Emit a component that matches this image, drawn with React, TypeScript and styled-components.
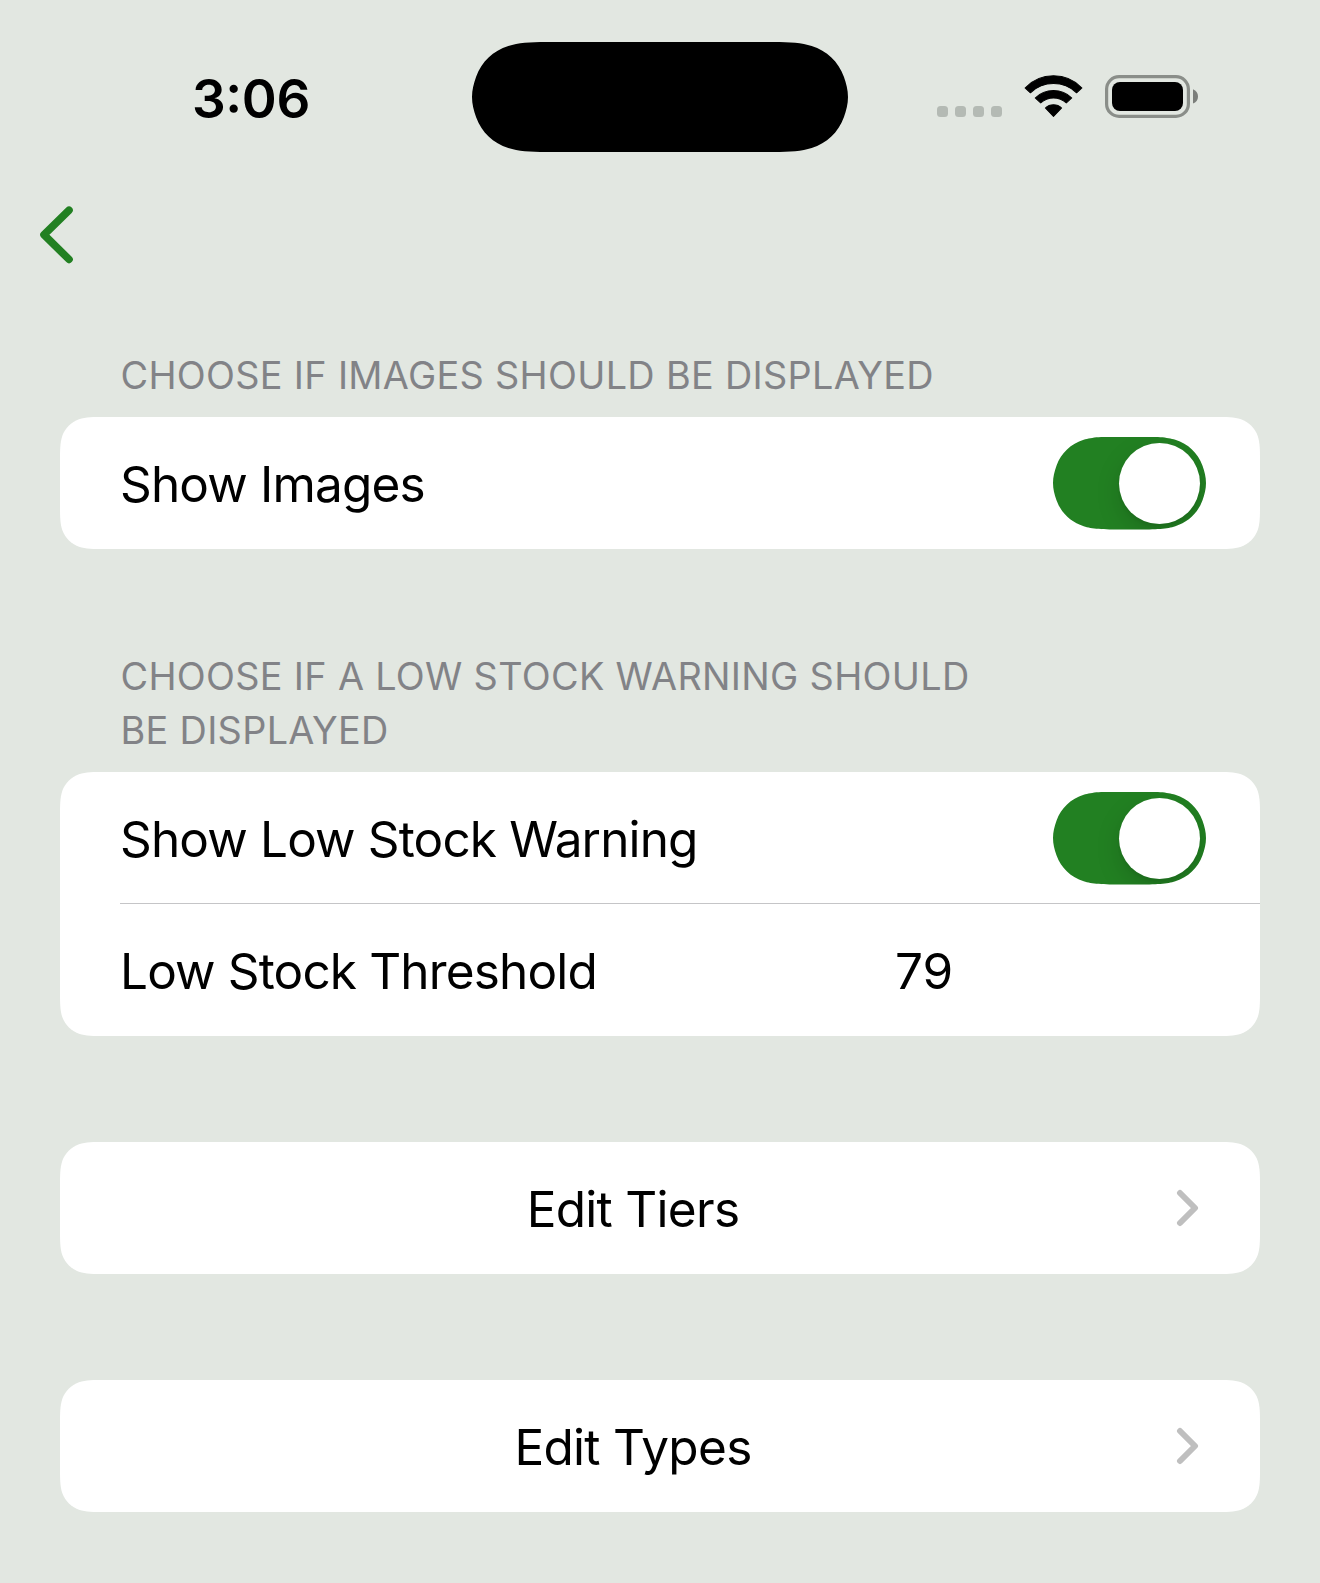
import React from "react";
import styled, { createGlobalStyle } from "styled-components";

const colors = {
  background: "#e2e7e1",
  card: "#ffffff",
  tint: "#228022",
  header: "#828387",
  separator: "#c5c5c7",
  disclosure: "#bfbfbf",
};

/* Rounded rectangle with continuous curvature; `reach` is how far, in radii,
   the curve runs along the horizontal edge. Shapes too short for the full
   vertical run are drawn as capsules with a longer shoulder. */
const squircle = (w: number, h: number, r: number, reach = 1.5287) => {
  const vReach = Math.min(1.5287, h / 2 / r);
  const capsule = vReach < 1.4;
  const a = capsule ? [0.66, 0.072] : [0.6315, 0.0749];
  const m = capsule ? [0.385, 0.16] : [0.3728, 0.1691];
  const n = capsule ? [0.176, 0.353] : [0.1691, 0.3728];
  const b = capsule ? [0.84, 0.0144] : [0.8684, 0];
  const c = capsule ? 1.05 : 1.0885;
  const d = capsule ? 0.874 : 1.0885;
  const e = capsule ? [0.032, 0.75] : [0, 0.8684];
  const p = (x: number, y: number, fx: boolean, fy: boolean) =>
    `${(fx ? w - x * r : x * r).toFixed(2)} ${(fy ? h - y * r : y * r).toFixed(2)}`;
  const down = (fx: boolean, fy: boolean) =>
    `C${p(c, 0, fx, fy)} ${p(b[0], b[1], fx, fy)} ${p(a[0], a[1], fx, fy)}` +
    `C${p(m[0], m[1], fx, fy)} ${p(n[0], n[1], fx, fy)} ${p(0.0749, 0.6315, fx, fy)}` +
    `C${p(e[0], e[1], fx, fy)} ${p(0, d, fx, fy)} ${p(0, vReach, fx, fy)}`;
  const up = (fx: boolean, fy: boolean) =>
    `C${p(0, d, fx, fy)} ${p(e[0], e[1], fx, fy)} ${p(0.0749, 0.6315, fx, fy)}` +
    `C${p(n[0], n[1], fx, fy)} ${p(m[0], m[1], fx, fy)} ${p(a[0], a[1], fx, fy)}` +
    `C${p(b[0], b[1], fx, fy)} ${p(c, 0, fx, fy)} ${p(reach, 0, fx, fy)}`;
  return (
    `M${p(reach, 0, true, false)}${down(true, false)}` +
    `L${p(0, vReach, true, true)}${up(true, true)}` +
    `L${p(reach, 0, false, true)}${down(false, true)}` +
    `L${p(0, vReach, false, false)}${up(false, false)}Z`
  );
};

const GlobalStyle = createGlobalStyle`
  body {
    margin: 0;
    background: ${colors.background};
  }
`;

const Screen = styled.div`
  box-sizing: border-box;
  width: 1320px;
  height: 1583px;
  overflow: hidden;
  background: ${colors.background};
  color: #000;
  font-family: Inter, "Liberation Sans", sans-serif;
`;

const StatusBar = styled.header`
  display: grid;
  grid-template-columns: 472px 376px 1fr;
  height: 194px;
`;

const Time = styled.time`
  padding: 65.5px 0 0 192px;
  font-size: 53px;
  line-height: 66px;
  font-weight: 600;
  letter-spacing: -0.4px;
  font-feature-settings: "calt" 1, "case" 1;
`;

const Island = styled.div`
  width: 376px;
  height: 110px;
  margin-top: 42px;
  background: #000;
  clip-path: path("${squircle(376, 110, 55, 1.35)}");
`;

const StatusIcons = styled.div`
  display: flex;
  padding: 74px 0 0 89px;
`;

const Cellular = styled.div`
  display: flex;
  gap: 7px;
  margin: 32px 21px 0 0;
`;

const Dot = styled.span`
  width: 11px;
  height: 11px;
  border-radius: 3.5px;
  background: #b4bab4;
`;

const WifiIcon = styled.svg`
  width: 61px;
  height: 46px;
  margin-right: 20px;
`;

const BatteryIcon = styled.svg`
  width: 96px;
  height: 46px;
`;

const NavBar = styled.nav`
  display: flex;
  align-items: center;
  height: 82px;
  padding-left: 36px;
`;

const BackButton = styled.button`
  display: flex;
  padding: 0;
  border: 0;
  background: none;
  color: ${colors.tint};
`;

const Form = styled.main`
  display: flex;
  flex-direction: column;
  padding: 72px 60px 0;
`;

const Section = styled.section<{ $space?: number }>`
  margin-bottom: ${({ $space = 106 }) => $space}px;
`;

const SectionHeader = styled.h2`
  margin: 0;
  width: 900px;
  padding: 0 60px 15px 60.5px;
  color: ${colors.header};
  font-size: 37.8px;
  line-height: 54px;
  font-weight: 400;
  letter-spacing: 0.32px;
  text-transform: uppercase;
`;

const Card = styled.div<{ $rows?: number }>`
  height: ${({ $rows = 1 }) => $rows * 132}px;
  background: ${colors.card};
  clip-path: path("${({ $rows = 1 }) => squircle(1200, $rows * 132, 30)}");
`;

const Row = styled.div<{ $divided?: boolean }>`
  box-sizing: border-box;
  display: flex;
  align-items: center;
  height: 132px;
  margin-left: 60px;
  padding-right: 54px;
  box-shadow: ${({ $divided }) => ($divided ? `inset 0 -1px ${colors.separator}` : "none")};
`;

const Label = styled.span<{ $centered?: boolean }>`
  flex: 1;
  padding-top: 2px;
  font-size: 49.5px;
  line-height: 60px;
  letter-spacing: ${({ $centered }) => ($centered ? "-0.7px" : "-0.85px")};
  white-space: nowrap;
  text-align: ${({ $centered }) => ($centered ? "center" : "left")};
`;

const Value = styled(Label)`
  flex: 0 0 311px;
  letter-spacing: 0;
`;

const Switch = styled.button`
  display: flex;
  justify-content: flex-end;
  box-sizing: border-box;
  width: 153px;
  height: 93px;
  padding: 6px;
  border: 0;
  background: ${colors.tint};
  clip-path: path("${squircle(153, 93, 46.5)}");
`;

const Knob = styled.span`
  width: 81px;
  height: 81px;
  border-radius: 50%;
  background: #fff;
  box-shadow: 0 9px 24px rgba(0, 0, 0, 0.15), 0 3px 3px rgba(0, 0, 0, 0.06);
`;

const Disclosure = styled.svg`
  width: 24px;
  height: 40px;
  margin: 0 6px 0 30px;
`;

const Wifi = () => (
  <WifiIcon viewBox="0 0 60 46" preserveAspectRatio="none" stroke="#000" strokeWidth="1" strokeLinejoin="round">
    <path d="M2 14A38.3 38.3 0 0 1 58 14L52.7 18.8A32.5 32.5 0 0 0 7.3 18.8Z" />
    <path d="M12 24A25.4 25.4 0 0 1 48 24L42.6 29A18.2 18.2 0 0 0 17.4 29Z" />
    <path d="M22 34A11.3 11.3 0 0 1 38 34L30 42.4Z" />
  </WifiIcon>
);

const Battery = () => (
  <BatteryIcon viewBox="0 0 96 46">
    <rect x="2.6" y="2.6" width="81.8" height="39.8" rx="12.5" fill="none" stroke="#8a8e89" strokeWidth="3.2" />
    <rect x="8" y="8" width="71" height="29" rx="8" />
    <path d="M89 15.2C92 16.4 94 19 94 22.4C94 25.8 92 28.4 89 29.6Z" fill="#7b7e7a" />
  </BatteryIcon>
);

const Toggle = () => (
  <Switch type="button" role="switch" aria-checked>
    <Knob />
  </Switch>
);

const LinkRow = ({ children }: { children: React.ReactNode }) => (
  <Row>
    <Label $centered>{children}</Label>
    <Disclosure viewBox="0 0 24 40" fill="none" stroke={colors.disclosure} strokeWidth="6" strokeLinecap="round" strokeLinejoin="round">
      <path d="M4 5L19 20L4 35" />
    </Disclosure>
  </Row>
);

export default function App() {
  return (
    <>
      <GlobalStyle />
      <Screen>
        <StatusBar>
          <Time>3:06</Time>
          <Island />
          <StatusIcons>
            <Cellular>
              <Dot />
              <Dot />
              <Dot />
              <Dot />
            </Cellular>
            <Wifi />
            <Battery />
          </StatusIcons>
        </StatusBar>
        <NavBar>
          <BackButton type="button" aria-label="Back">
            <svg width="40" height="60" viewBox="0 0 40 60" fill="none" stroke="currentColor" strokeWidth="7.6" strokeLinecap="round" strokeLinejoin="round">
              <path d="M33 5.2L8 29.8L33 54.4" />
            </svg>
          </BackButton>
        </NavBar>
        <Form>
          <Section $space={100}>
            <SectionHeader>Choose if images should be displayed</SectionHeader>
            <Card>
              <Row>
                <Label>Show Images</Label>
                <Toggle />
              </Row>
            </Card>
          </Section>
          <Section>
            <SectionHeader>Choose if a low stock warning should be displayed</SectionHeader>
            <Card $rows={2}>
              <Row $divided>
                <Label>Show Low Stock Warning</Label>
                <Toggle />
              </Row>
              <Row>
                <Label>Low Stock Threshold</Label>
                <Value>79</Value>
              </Row>
            </Card>
          </Section>
          <Section>
            <Card>
              <LinkRow>Edit Tiers</LinkRow>
            </Card>
          </Section>
          <Section>
            <Card>
              <LinkRow>Edit Types</LinkRow>
            </Card>
          </Section>
        </Form>
      </Screen>
    </>
  );
}
